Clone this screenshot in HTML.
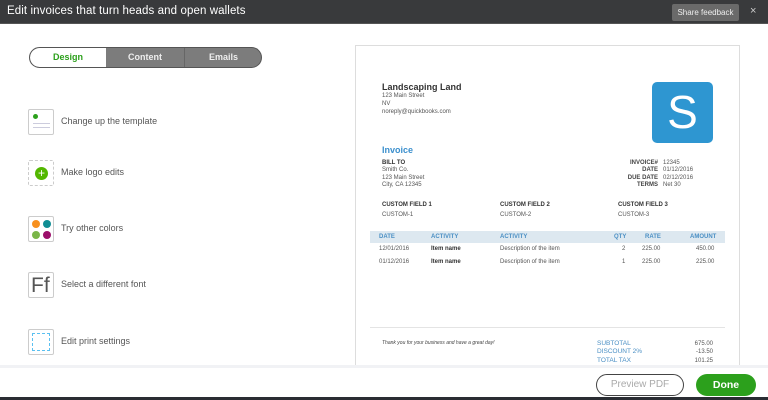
<!DOCTYPE html>
<html><head><style>
*{margin:0;padding:0;box-sizing:border-box}
body{width:768px;height:400px;overflow:hidden;background:#fff;font-family:"Liberation Sans",sans-serif;position:relative}
.a{position:absolute;white-space:nowrap}
.hdr{left:0;top:0;width:768px;height:24px;background:#393a3c;border-bottom:1px solid #555}
.s{font-size:6px;color:#555}
.b{font-weight:bold;color:#333}
.ic{width:26px;height:26px;border:1px solid #ccc;border-radius:2px;background:#fff}
.lbl{font-size:9px;color:#555}
.th{font-size:6px;color:#4a8fc4;font-weight:bold}
.tl{font-size:6.5px;color:#4a8fc4}
</style></head><body>
<div class="a hdr"></div>
<div class="a" style="left:7px;top:5px;font-size:11.5px;color:#fff;letter-spacing:0.1px">Edit invoices that turn heads and open wallets</div>
<div class="a" style="left:672px;top:4px;width:67px;height:17px;background:#6a6a6a;border-radius:2px;color:#eee;font-size:8px;text-align:center;line-height:17px">Share feedback</div>
<div class="a" style="left:750px;top:5px;color:#ccc;font-size:11px">×</div>

<div class="a" style="left:29px;top:47px;width:233px;height:21px;border-radius:11px;background:#7c7c7c;border:1px solid #555;overflow:hidden">
<div class="a" style="left:0;top:0;width:76px;height:19px;background:#fff;border-radius:10px 0 0 10px;color:#2ca01c;font-size:9px;text-align:center;line-height:19px;font-weight:bold">Design</div>
<div class="a" style="left:76px;top:0;width:79px;height:19px;color:#eee;font-size:9px;text-align:center;line-height:19px;font-weight:bold;border-right:1px solid #666">Content</div>
<div class="a" style="left:155px;top:0;width:77px;height:19px;color:#eee;font-size:9px;text-align:center;line-height:19px;font-weight:bold">Emails</div>
</div>

<div class="a ic" style="left:28px;top:109px"><div class="a" style="left:4px;top:4px;width:5px;height:5px;border-radius:50%;background:#2ca01c"></div><div class="a" style="left:4px;top:13px;width:17px;border-top:1px solid #ccd;height:5px;border-bottom:1px solid #ccd"></div></div>
<div class="a lbl" style="left:61px;top:116px">Change up the template</div>
<div class="a ic" style="left:28px;top:160px;border-style:dashed"><div class="a" style="left:6px;top:6px;width:13px;height:13px;border-radius:50%;background:#53b700;color:#fff;font-size:12px;line-height:12px;text-align:center">+</div></div>
<div class="a lbl" style="left:61px;top:167px">Make logo edits</div>
<div class="a ic" style="left:28px;top:216px">
<div class="a" style="left:3px;top:3px;width:8px;height:8px;border-radius:50%;background:#f7901e"></div>
<div class="a" style="left:14px;top:3px;width:8px;height:8px;border-radius:50%;background:#108e94"></div>
<div class="a" style="left:3px;top:14px;width:8px;height:8px;border-radius:50%;background:#7ab648"></div>
<div class="a" style="left:14px;top:14px;width:8px;height:8px;border-radius:50%;background:#9c0f6b"></div></div>
<div class="a lbl" style="left:61px;top:223px">Try other colors</div>
<div class="a ic" style="left:28px;top:272px"><div class="a" style="left:2px;top:1px;font-size:21px;color:#555;font-weight:300">Ff</div></div>
<div class="a lbl" style="left:61px;top:279px">Select a different font</div>
<div class="a ic" style="left:28px;top:329px"><div class="a" style="left:3px;top:3px;width:18px;height:18px;border:1px dashed #5bc0f0"></div></div>
<div class="a lbl" style="left:61px;top:336px">Edit print settings</div>

<div class="a" style="left:355px;top:45px;width:385px;height:330px;border:1px solid #ddd"></div>
<div class="a b" style="left:382px;top:82px;font-size:9px">Landscaping Land</div>
<div class="a s" style="left:382px;top:92px;line-height:8px">123 Main Street<br>NV<br>noreply@quickbooks.com</div>
<div class="a" style="left:652px;top:82px;width:61px;height:61px;background:#2e96d1;border-radius:5px;color:#fff;font-size:46px;text-align:center;line-height:60px">S</div>
<div class="a" style="left:382px;top:145px;font-size:9px;color:#3b8fcd;font-weight:bold">Invoice</div>
<div class="a s" style="left:382px;top:160px;line-height:7.3px"><b style="color:#333">BILL TO</b><br>Smith Co.<br>123 Main Street<br>City, CA 12345</div>
<div class="a s" style="left:600px;top:160px;line-height:7.3px;text-align:right;width:58px;font-weight:bold;color:#444">INVOICE#<br>DATE<br>DUE DATE<br>TERMS</div>
<div class="a s" style="left:663px;top:160px;line-height:7.3px">12345<br>01/12/2016<br>02/12/2016<br>Net 30</div>
<div class="a s b" style="left:382px;top:202px">CUSTOM FIELD 1</div><div class="a s" style="left:382px;top:212px">CUSTOM-1</div>
<div class="a s b" style="left:500px;top:202px">CUSTOM FIELD 2</div><div class="a s" style="left:500px;top:212px">CUSTOM-2</div>
<div class="a s b" style="left:618px;top:202px">CUSTOM FIELD 3</div><div class="a s" style="left:618px;top:212px">CUSTOM-3</div>
<div class="a" style="left:370px;top:231px;width:355px;height:12px;background:#dde8f0"></div>
<div class="a th" style="left:379px;top:234px">DATE</div><div class="a th" style="left:431px;top:234px">ACTIVITY</div><div class="a th" style="left:500px;top:234px">ACTIVITY</div><div class="a th" style="left:614px;top:234px">QTY</div><div class="a th" style="left:645px;top:234px">RATE</div><div class="a th" style="left:690px;top:234px">AMOUNT</div>
<div class="a s" style="left:379px;top:246px">12/01/2016</div><div class="a s b" style="left:431px;top:246px">Item name</div><div class="a s" style="left:500px;top:246px">Description of the item</div><div class="a s" style="left:622px;top:246px">2</div><div class="a s" style="left:642px;top:246px">225.00</div><div class="a s" style="left:696px;top:246px">450.00</div>
<div class="a s" style="left:379px;top:259px">01/12/2016</div><div class="a s b" style="left:431px;top:259px">Item name</div><div class="a s" style="left:500px;top:259px">Description of the item</div><div class="a s" style="left:622px;top:259px">1</div><div class="a s" style="left:642px;top:259px">225.00</div><div class="a s" style="left:696px;top:259px">225.00</div>
<div class="a" style="left:370px;top:327px;width:355px;border-top:1px solid #e4e4e4"></div>
<div class="a" style="left:382px;top:340px;font-size:5px;font-style:italic;color:#444">Thank you for your business and have a great day!</div>
<div class="a tl" style="left:597px;top:340px;line-height:8.3px">SUBTOTAL<br>DISCOUNT 2%<br>TOTAL TAX</div>
<div class="a s" style="left:690px;top:340px;line-height:8.3px;text-align:right;width:23px">675.00<br>-13.50<br>101.25</div>

<div class="a" style="left:0;top:365px;width:768px;height:3px;background:#f1f2f5"></div>
<div class="a" style="left:0;top:368px;width:768px;height:30px;background:#fff"></div>
<div class="a" style="left:0;top:397px;width:768px;height:3px;background:#2a2d33"></div>
<div class="a" style="left:596px;top:374px;width:88px;height:22px;border:1px solid #444;border-radius:11px;color:#aaa;font-size:10px;text-align:center;line-height:20px">Preview PDF</div>
<div class="a" style="left:696px;top:374px;width:60px;height:22px;background:#2ca01c;border-radius:11px;color:#fff;font-size:10.5px;font-weight:bold;text-align:center;line-height:22px">Done</div>
</body></html>
